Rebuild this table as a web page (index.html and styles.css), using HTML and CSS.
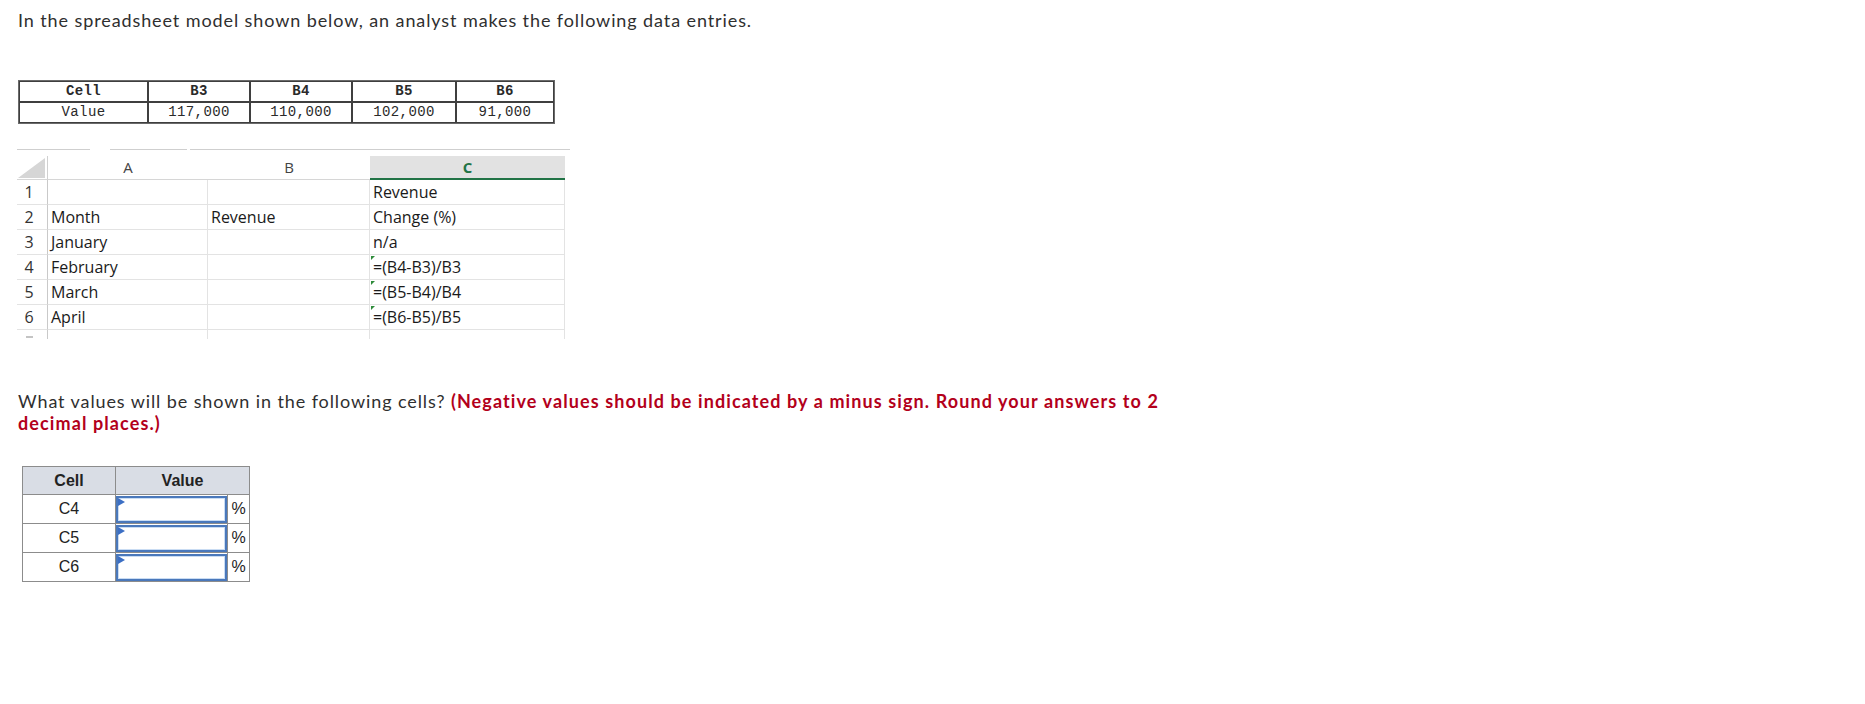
FILE: index.html
```html
<!DOCTYPE html>
<html lang="en">
<head>
<meta charset="utf-8">
<title>Spreadsheet question</title>
<link rel="stylesheet" href="styles.css">
</head>
<body>
<div class="page">
  <p class="intro">In the spreadsheet model shown below, an analyst makes the following data entries.</p>

  <table class="entries">
    <tr class="head">
      <td class="c-cell">Cell</td>
      <td class="c-b">B3</td>
      <td class="c-b">B4</td>
      <td class="c-b5">B5</td>
      <td class="c-b6">B6</td>
    </tr>
    <tr>
      <td>Value</td>
      <td>117,000</td>
      <td>110,000</td>
      <td>102,000</td>
      <td>91,000</td>
    </tr>
  </table>

  <div class="sheet">
    <div class="frame">
      <span class="seg s1"></span><span class="seg s2"></span><span class="seg s3"></span>
    </div>
    <div class="grid">
      <div class="hd corner"><span class="tri"></span></div>
      <div class="hd">A</div>
      <div class="hd">B</div>
      <div class="hd sel">C</div>

      <div class="rn">1</div><div class="cl"></div><div class="cl"></div><div class="cl">Revenue</div>
      <div class="rn">2</div><div class="cl">Month</div><div class="cl">Revenue</div><div class="cl">Change (%)</div>
      <div class="rn">3</div><div class="cl">January</div><div class="cl"></div><div class="cl">n/a</div>
      <div class="rn">4</div><div class="cl">February</div><div class="cl"></div><div class="cl fx">=(B4-B3)/B3</div>
      <div class="rn">5</div><div class="cl">March</div><div class="cl"></div><div class="cl fx">=(B5-B4)/B4</div>
      <div class="rn">6</div><div class="cl">April</div><div class="cl"></div><div class="cl fx">=(B6-B5)/B5</div>
      <div class="rn cut"></div><div class="cl cut"></div><div class="cl cut"></div><div class="cl cut"></div>
    </div>
  </div>

  <p class="question">What values will be shown in the following cells? <strong class="hint">(Negative values should be indicated by a minus sign. Round your answers to 2 decimal places.)</strong></p>

  <table class="answers">
    <tr class="ahead">
      <th class="a-cell">Cell</th>
      <th colspan="2">Value</th>
    </tr>
    <tr>
      <td>C4</td>
      <td class="inpcell"><div class="inp"><span class="flag"></span></div></td>
      <td class="pct">%</td>
    </tr>
    <tr>
      <td>C5</td>
      <td class="inpcell"><div class="inp"><span class="flag"></span></div></td>
      <td class="pct">%</td>
    </tr>
    <tr>
      <td>C6</td>
      <td class="inpcell"><div class="inp"><span class="flag"></span></div></td>
      <td class="pct">%</td>
    </tr>
  </table>
</div>
</body>
</html>
```

FILE: styles.css
```css
html, body {
  margin: 0;
  padding: 0;
  background: #ffffff;
}

.page {
  padding: 9px 18px 0 18px;
  font-family: "Lato", "Liberation Sans", sans-serif;
  color: #2f2f2f;
}

.intro {
  margin: 0;
  font-size: 18px;
  letter-spacing: 0.9px;
  line-height: 22px;
}

/* data entries table */
.entries {
  margin-top: 49px;
  border: 1px solid #6a6a6a;
  border-spacing: 0;
  table-layout: fixed;
  font-family: "Liberation Mono", "DejaVu Sans Mono", monospace;
  font-size: 14px;
  letter-spacing: 0.4px;
  color: #2a2a2a;
}

.entries td {
  border: 1px solid #3f3f3f;
  padding: 0;
  line-height: 19px;
  height: 19px;
  text-align: center;
}

.entries .head td {
  font-weight: bold;
}

.entries .c-cell { width: 127px; }
.entries .c-b { width: 100px; }
.entries .c-b5 { width: 102px; }
.entries .c-b6 { width: 96px; }

/* spreadsheet picture */
.sheet {
  margin-top: 25px;
  margin-left: -1px;
  width: 553px;
  font-family: "Open Sans", "Noto Sans", sans-serif;
  font-size: 16px;
  color: #1a1a1a;
}

.frame {
  display: flex;
  height: 1px;
  margin-bottom: 6px;
}

.seg {
  display: block;
  height: 1px;
  background: #cfcfcf;
}

.s1 { width: 73px; }
.s2 { width: 77px; margin-left: 20px; }
.s3 { flex: 1; margin-left: 3px; }

.grid {
  display: grid;
  grid-template-columns: 31px 160px 162px 195px;
  grid-template-rows: 24px repeat(6, 25px) 9px;
  overflow: hidden;
}

.hd {
  border-bottom: 1px solid #d6d6d6;
  text-align: center;
  font-size: 15px;
  line-height: 23px;
  color: #444444;
  background: #ffffff;
}

.hd.corner {
  position: relative;
  border-right: 1px solid #d0d0d0;
}

.tri {
  position: absolute;
  left: 1px;
  top: 2px;
  width: 0;
  height: 0;
  border-style: solid;
  border-width: 0 0 20px 27px;
  border-color: transparent transparent #d6d6d6 transparent;
}

.hd.sel {
  background: #e2e2e2;
  color: #217346;
  font-weight: bold;
  border-bottom: 2px solid #217346;
  line-height: 22px;
}

.rn {
  position: relative;
  border-right: 1px solid #c9c9c9;
  border-bottom: 1px solid #e3e3e3;
  text-align: center;
  padding-right: 6px;
  line-height: 24px;
  color: #333333;
}

.cl {
  position: relative;
  border-right: 1px solid #e3e3e3;
  border-bottom: 1px solid #e3e3e3;
  padding-left: 3px;
  line-height: 24px;
  white-space: nowrap;
}

.cut {
  border-bottom: none;
}

.rn.cut::after {
  content: "";
  position: absolute;
  left: 9px;
  top: 6px;
  width: 7px;
  height: 2px;
  background: #c4c4c4;
}

.fx::before {
  content: "";
  position: absolute;
  left: 1px;
  top: 1px;
  width: 0;
  height: 0;
  border-style: solid;
  border-width: 4px 4px 0 0;
  border-color: #2e8b3a transparent transparent transparent;
}

/* question text */
.question {
  margin: 51px 0 0 0;
  width: 1180px;
  font-size: 18px;
  letter-spacing: 0.9px;
  line-height: 22px;
}

.hint {
  color: #b3001b;
  font-weight: bold;
  letter-spacing: 1.1px;
}

/* answer table */
.answers {
  margin-top: 32px;
  margin-left: 4px;
  border-collapse: collapse;
  font-family: "Liberation Sans", Arial, sans-serif;
  font-size: 16px;
  color: #222222;
}

.answers th,
.answers td {
  border: 1px solid #8c8c8c;
  padding: 0;
  text-align: center;
}

.answers th {
  background: #d9dde5;
  height: 27px;
  font-weight: bold;
}

.answers .a-cell {
  width: 92px;
}

.answers td {
  height: 28px;
}

.answers .inpcell {
  width: 111px;
  padding: 0;
  vertical-align: top;
}

.inp {
  position: relative;
  box-sizing: border-box;
  height: 27px;
  margin-top: 1px;
  border: 2px solid #4a78bb;
  box-shadow: inset 0 0 0 1px #c9dcf3;
  background: #ffffff;
}

.flag {
  position: absolute;
  left: 0;
  top: 0;
  width: 0;
  height: 0;
  border-style: solid;
  border-width: 4px 0 4px 7px;
  border-color: transparent transparent transparent #3c6fc4;
}

.answers .pct {
  width: 21px;
  font-size: 16px;
}
```
